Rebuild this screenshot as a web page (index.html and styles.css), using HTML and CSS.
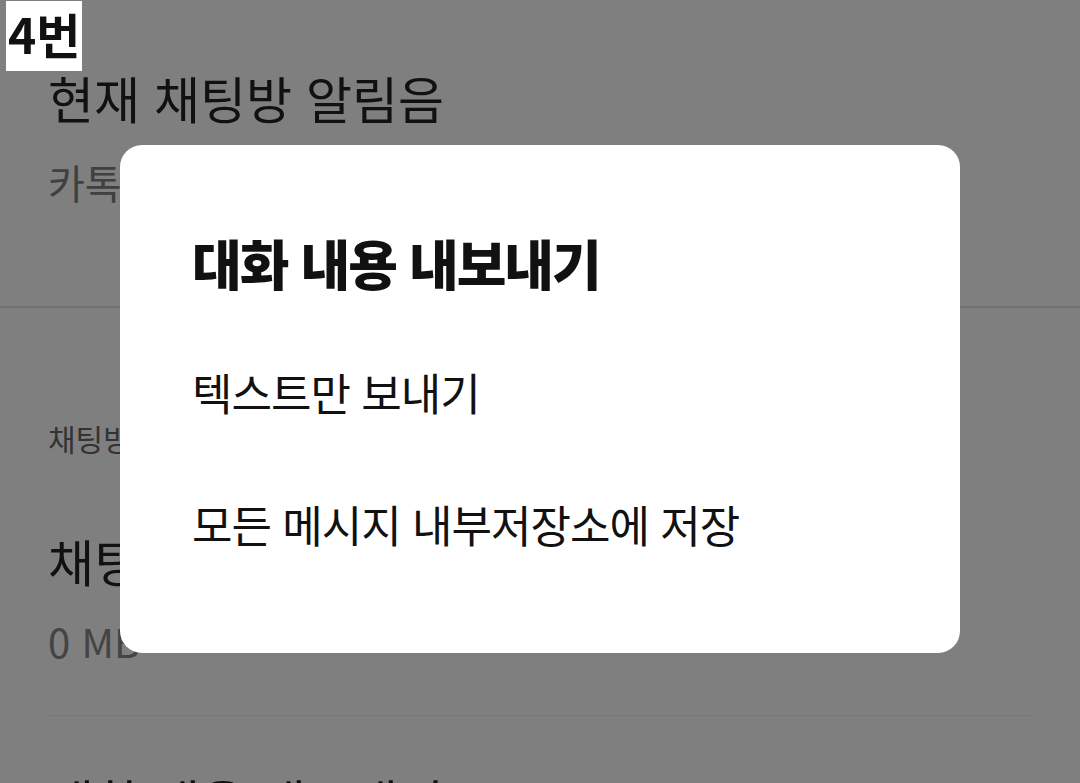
FILE: index.html
```html
<!DOCTYPE html>
<html lang="ko">
<head>
    <meta charset="UTF-8">
    <title>채팅방 설정</title>
    <link rel="stylesheet" href="styles.css">
</head>
<body>
    <div class="page">
        <div class="block">
            <div class="row-title">현재 채팅방 알림음</div>
            <div class="row-sub">카톡 기본 알림음</div>
        </div>
        <hr class="line-full">

        <div class="section">채팅방 저장공간 관리</div>
        <div class="row-title size">채팅방 용량</div>
        <div class="row-sub mb">0 MB</div>
        <hr class="line">
        <div class="row-title last">대화 내용 내보내기</div>
    </div>

    <div class="dim">
        <div class="dialog">
            <h1>대화 내용 내보내기</h1>
            <a href="#">텍스트만 보내기</a>
            <a href="#">모든 메시지 내부저장소에 저장</a>
        </div>
    </div>

    <div class="tag">4번</div>
</body>
</html>
```

FILE: styles.css
```css
html, body{
    margin:0;
    height:100%;
    overflow:hidden;
}

body{
    background-color:#fff;
    font-family:"Noto Sans CJK KR", sans-serif;
}

.page{
    padding:0 48px;
}

.block{
    padding:67px 0 99px;
}

.row-title{
    font-size:50px;
    line-height:60px;
    color:#222;
}

.row-sub{
    font-size:40px;
    line-height:50px;
    color:#808080;
    margin-top:30px;
}

.line-full{
    margin:0 -48px;
    border:0;
    height:2px;
    background-color:#e2e2e2;
}

.section{
    margin-top:110px;
    font-size:30px;
    line-height:40px;
    color:#666;
}

.size{
    margin-top:72px;
}

.mb{
    margin-top:26px;
    color:#888;
    font-size:40px;
}

.line{
    margin:49px 0 0;
    border:0;
    height:1px;
    background-color:#f0f0f0;
}

.last{
    margin-top:54px;
}

/* dimmed layer + popup */
.dim{
    position:fixed;
    left:0;
    top:0;
    right:0;
    bottom:0;
    background-color:rgba(0,0,0,0.5);
    display:flex;
    justify-content:center;
    align-items:flex-start;
    padding-top:145px;
}

.dialog{
    width:840px;
    box-sizing:border-box;
    background-color:#fff;
    border-radius:22px;
    padding:86px 72px 63px;
    display:flex;
    flex-direction:column;
}

.dialog h1{
    margin:0 0 31px;
    font-size:54px;
    line-height:64px;
    font-weight:900;
    letter-spacing:-2px;
    color:#111;
}

.dialog a{
    display:block;
    height:132px;
    line-height:132px;
    font-size:44px;
    letter-spacing:-1px;
    color:#111;
    text-decoration:none;
}

.tag{
    position:absolute;
    left:6px;
    top:1px;
    height:70px;
    padding:0 2px;
    background-color:#fff;
    font-size:48px;
    line-height:64px;
    font-weight:700;
    color:#111;
}
```
